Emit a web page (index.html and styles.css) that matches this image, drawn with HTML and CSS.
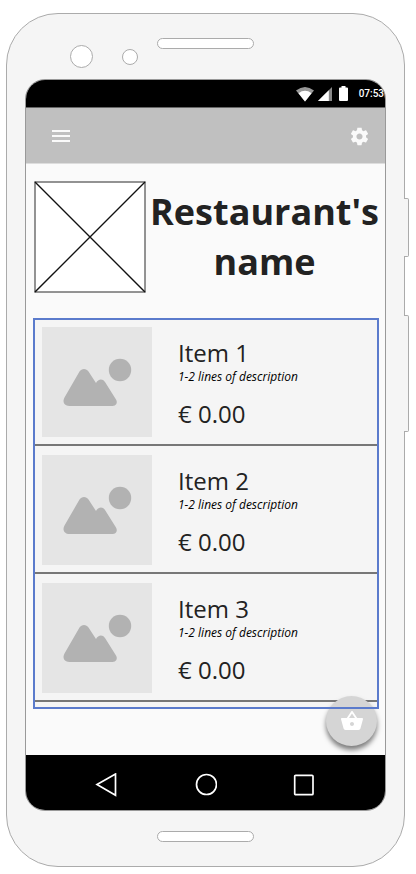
FILE: index.html
```html
<!DOCTYPE html>
<html lang="en">
<head>
<meta charset="utf-8">
<meta name="viewport" content="width=device-width, initial-scale=1">
<title>Restaurant menu</title>
<link rel="stylesheet" href="styles.css">
</head>
<body>
<svg class="defs" aria-hidden="true">
  <symbol id="photo" viewBox="0 0 110 110">
    <path d="M37.500 44.500C39.500 41 44.500 41 46.500 44.500L54 56C56 52 60.500 51 63 55L74 72.500C76 76 74 79 70.500 79H27.500C22.500 79 20 75 22.500 70.500Z"/>
    <circle cx="78" cy="43" r="11.200"/>
  </symbol>
</svg>
<div class="phone">
  <span class="key key-power"></span>
  <span class="key key-volume"></span>
  <div class="bezel bezel-top">
    <div class="sensors"><span class="camera"></span><span class="sensor"></span></div>
    <span class="speaker"></span>
  </div>
  <div class="screen">
    <div class="status">
      <svg width="18" height="16" viewBox="0 0 18 16"><path fill="#999" d="M0 4.500Q9-2.500 18 4.500L9 15.500Z"/><path fill="#fff" d="M2.500 7.200Q9 2.500 15.500 7.200L9 15.500Z"/></svg>
      <svg width="14" height="14" viewBox="0 0 14 14"><path fill="#888" d="M14 0V14H0Z"/><path fill="#fff" d="M10.800 3.200V14H0Z"/></svg>
      <svg width="9" height="15" viewBox="0 0 9 15"><path fill="#fff" d="M2.500 0H6.500V1.500H8Q9 1.500 9 2.500V14Q9 15 8 15H1Q0 15 0 14V2.500Q0 1.500 1 1.500H2.500Z"/></svg>
      <time class="time">07:53</time>
    </div>
    <header class="appbar">
      <button class="icon-button" type="button" aria-label="Menu">
        <svg width="24" height="24" viewBox="0 0 24 24"><path fill="#fafafa" d="M3 18h18v-2H3zM3 13h18v-2H3zM3 8h18V6H3z"/></svg>
      </button>
      <button class="icon-button" type="button" aria-label="Settings">
        <svg width="21" height="22" viewBox="0 -1 24 25"><path fill="#fafafa" d="M19.430 12.980c.04-.32.070-.64.070-.98s-.03-.66-.07-.98l2.110-1.650c.19-.15.240-.42.120-.64l-2-3.460c-.12-.22-.39-.3-.61-.22l-2.490 1c-.52-.4-1.080-.73-1.690-.98l-.38-2.650C14.460 2.180 14.250 2 14 2h-4c-.25 0-.46.180-.49.420l-.38 2.650c-.61.250-1.170.590-1.690.980l-2.490-1c-.23-.09-.49 0-.61.220l-2 3.460c-.13.220-.07.490.120.640l2.110 1.650c-.04.320-.07.650-.07.980s.03.660.070.980l-2.110 1.650c-.19.150-.24.420-.12.640l2 3.460c.12.220.39.300.61.220l2.490-1c.52.400 1.080.730 1.690.980l.38 2.650c.03.240.24.420.49.420h4c.25 0 .46-.18.490-.42l.38-2.650c.61-.25 1.170-.59 1.690-.98l2.490 1c.23.090.49 0 .61-.22l2-3.460c.12-.22.070-.49-.12-.64l-2.110-1.650zM12 15.500c-1.930 0-3.500-1.570-3.500-3.500s1.570-3.500 3.500-3.500 3.500 1.570 3.500 3.500-1.570 3.500-3.500 3.500z"/></svg>
      </button>
    </header>
    <main class="content">
      <section class="hero">
        <svg class="logo" viewBox="0 0 112 112" role="img" aria-label="Logo"><rect x="1" y="1" width="110" height="110" fill="#fff" stroke="#707070" stroke-width="1.500"/><path d="M1 1L111 111M111 1L1 111" stroke="#111" stroke-width="1.400"/></svg>
        <h1 class="title">Restaurant's name</h1>
      </section>
      <ul class="menu">
        <li class="item">
          <svg class="photo"><use href="#photo"/></svg>
          <div class="info"><h2 class="name">Item 1</h2><p class="description">1-2 lines of description</p><p class="price">€ 0.00</p></div>
        </li>
        <li class="item">
          <svg class="photo"><use href="#photo"/></svg>
          <div class="info"><h2 class="name">Item 2</h2><p class="description">1-2 lines of description</p><p class="price">€ 0.00</p></div>
        </li>
        <li class="item">
          <svg class="photo"><use href="#photo"/></svg>
          <div class="info"><h2 class="name">Item 3</h2><p class="description">1-2 lines of description</p><p class="price">€ 0.00</p></div>
        </li>
      </ul>
      <button class="fab" type="button" aria-label="Basket">
        <svg width="24" height="24" viewBox="0 0 24 24"><path fill="#fff" d="M17.210 9l-4.380-6.560c-.19-.28-.51-.42-.83-.42-.32 0-.64.140-.83.430L6.790 9H2c-.55 0-1 .45-1 1 0 .09.010.18.040.27l2.540 9.270c.23.840 1 1.460 1.920 1.460h13c.92 0 1.690-.62 1.930-1.460l2.540-9.270L23 10c0-.55-.45-1-1-1h-4.790zM9 9l3-4.400L15 9H9zm3 8c-1.100 0-2-.9-2-2s.9-2 2-2 2 .9 2 2-.9 2-2 2z"/></svg>
      </button>
    </main>
    <nav class="navbar" aria-label="System">
      <button class="icon-button" type="button" aria-label="Back"><svg width="24" height="24" viewBox="0 0 24 24"><path fill="none" stroke="#fff" stroke-width="1.700" d="M3 11.500L21.500 1V22.200Z"/></svg></button>
      <button class="icon-button" type="button" aria-label="Home"><svg width="24" height="24" viewBox="0 0 24 24"><circle cx="13.500" cy="11.500" r="10" fill="none" stroke="#fff" stroke-width="1.700"/></svg></button>
      <button class="icon-button" type="button" aria-label="Recent apps"><svg width="24" height="24" viewBox="0 0 24 24"><rect x="2.700" y="2.300" width="18.300" height="19.400" rx="1" fill="none" stroke="#fff" stroke-width="1.700"/></svg></button>
    </nav>
  </div>
  <div class="bezel bezel-bottom"><span class="speaker"></span></div>
</div>
</body>
</html>
```
FILE: styles.css
```css
* {
  box-sizing: border-box;
}

body {
  margin: 0;
  padding: 13px 11px 7px 6px;
  background: #fff;
  color: #222;
  font-family: "Open Sans", "Noto Sans", sans-serif;
}

h1, h2, p, ul {
  margin: 0;
  padding: 0;
}

svg {
  display: block;
  flex: none;
}

button {
  padding: 0;
  border: 0;
  background: none;
}

.defs {
  position: absolute;
  width: 0;
  height: 0;
}

.phone {
  position: relative;
  padding: 0 18px;
  border: 1px solid #ababab;
  border-radius: 52px;
  background: #f5f5f5;
}

.key {
  position: absolute;
  right: -5px;
  width: 5px;
  border: 1px solid #ababab;
  border-left: 0;
  border-radius: 0 2px 2px 0;
  background: #f5f5f5;
}

.key-power {
  top: 184px;
  height: 59px;
}

.key-volume {
  top: 301px;
  height: 117px;
}

.bezel {
  display: grid;
  grid-template-columns: 1fr 97px 1fr;
}

.bezel-top {
  height: 65px;
}

.bezel-bottom {
  height: 55px;
  padding-top: 20px;
}

.speaker {
  grid-column: 2;
  height: 11px;
  border: 1px solid #ababab;
  border-radius: 6px;
  background: #fff;
}

.bezel-top .speaker {
  margin-top: 24px;
}

.sensors {
  display: flex;
  align-items: center;
  justify-content: flex-end;
  gap: 29px;
  height: 23px;
  margin-top: 31px;
  padding-right: 19px;
}

.camera,
.sensor {
  border: 1px solid #ababab;
  border-radius: 50%;
  background: #fff;
}

.camera {
  width: 23px;
  height: 23px;
}

.sensor {
  width: 16px;
  height: 16px;
}

.screen {
  overflow: hidden;
  border: 1px solid #999;
  border-radius: 20px;
  background: #fafafa;
}

.status {
  display: flex;
  align-items: center;
  justify-content: flex-end;
  height: 28px;
  padding-right: 1px;
  background: #000;
  border-bottom: 1px solid #666;
}

.status svg + svg {
  margin-left: 4px;
}

.status svg:nth-of-type(3) {
  margin-left: 7px;
}

.time {
  margin-left: 11px;
  color: #fff;
  font: 500 10px/14px Roboto, sans-serif;
}

.appbar {
  display: flex;
  align-items: center;
  justify-content: space-between;
  height: 56px;
  padding: 0 15px 0 23px;
  background: #c0c0c0;
  border-bottom: 1px solid #ddd;
}

.content {
  position: relative;
  padding: 17px 6px 46px 7px;
}

.hero {
  display: flex;
  align-items: center;
  gap: 4px;
  padding-left: 1px;
  margin-bottom: 25px;
}

.logo {
  width: 112px;
  height: 112px;
}

.title {
  flex: 1;
  font-size: 36px;
  line-height: 50px;
  font-weight: 700;
  text-align: center;
}

.menu {
  position: relative;
  padding: 2px 2px 7px;
  background: #f5f5f5;
  list-style: none;
}

/* The frame is drawn above the floating button. */
.menu::after {
  content: "";
  position: absolute;
  inset: 0;
  z-index: 2;
  border: 2px solid #5b7bcc;
  pointer-events: none;
}

.item {
  display: flex;
  gap: 26px;
  padding: 9px 7px 7px;
  border-bottom: 2px solid #777;
}

.item:first-child {
  padding-top: 7px;
}

.photo {
  width: 110px;
  height: 110px;
  background: #e5e5e5;
  fill: #b2b2b2;
}

.info {
  padding-top: 10px;
}

.name,
.price {
  font-size: 24px;
  line-height: 32px;
  font-weight: 400;
}

.description {
  margin-bottom: 13px;
  color: #000;
  font-size: 12px;
  line-height: 16px;
  font-style: italic;
}

.fab {
  position: absolute;
  right: 8px;
  bottom: 9px;
  z-index: 1;
  display: grid;
  place-items: center;
  width: 51px;
  height: 50px;
  border-radius: 50%;
  background: #d5d5d5;
  box-shadow: 0 4px 5px rgba(0, 0, 0, 0.5);
}

.navbar {
  display: flex;
  align-items: center;
  justify-content: space-between;
  height: 55px;
  padding: 4px 69px 0 68px;
  background: #000;
}
```
